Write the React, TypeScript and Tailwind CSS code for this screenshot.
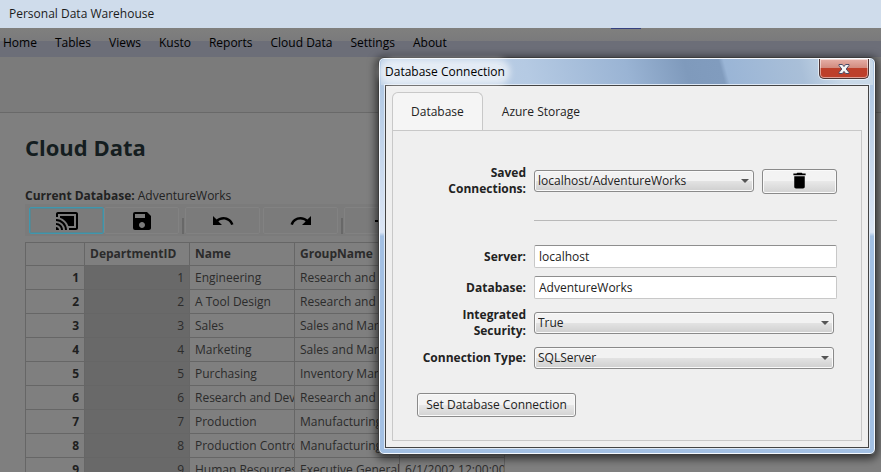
import { useState } from "react";
import type { ReactNode } from "react";
import { clsx } from "clsx";
import {
  MdAdd,
  MdCastConnected,
  MdDelete,
  MdRedo,
  MdSave,
  MdUndo,
} from "react-icons/md";

const menuItems = [
  "Home",
  "Tables",
  "Views",
  "Kusto",
  "Reports",
  "Cloud Data",
  "Settings",
  "About",
];

const departments = [
  { id: 1, name: "Engineering", group: "Research and Development" },
  { id: 2, name: "A Tool Design", group: "Research and Development" },
  { id: 3, name: "Sales", group: "Sales and Marketing" },
  { id: 4, name: "Marketing", group: "Sales and Marketing" },
  { id: 5, name: "Purchasing", group: "Inventory Management" },
  { id: 6, name: "Research and Development", group: "Research and Development" },
  { id: 7, name: "Production", group: "Manufacturing" },
  { id: 8, name: "Production Control", group: "Manufacturing" },
  { id: 9, name: "Human Resources", group: "Executive General and Admin" },
];

function ToolButton({
  label,
  active,
  children,
}: {
  label: string;
  active?: boolean;
  children: ReactNode;
}) {
  return (
    <button
      type="button"
      aria-label={label}
      className={clsx(
        "flex h-[27px] w-[75px] shrink-0 items-center justify-center rounded-xs border text-black",
        active
          ? "border-[#3f97ae] shadow-[inset_0_0_0_1px_#5b858f]"
          : "border-[#828282]"
      )}
    >
      {children}
    </button>
  );
}

function Separator() {
  return <div className="mr-px ml-[3px] h-4 w-0.5 shrink-0 self-end bg-[#686868]" />;
}

function Toolbar() {
  return (
    <div className="flex h-8 items-start bg-[#7b7b7b] pt-[3px] pb-0.5 pl-1">
      <ToolButton label="Connect" active>
        <MdCastConnected size={24} />
      </ToolButton>
      <ToolButton label="Save">
        <MdSave size={24} />
      </ToolButton>
      <Separator />
      <div className="flex gap-[3px]">
        <ToolButton label="Undo">
          <MdUndo size={24} />
        </ToolButton>
        <ToolButton label="Redo">
          <MdRedo size={24} />
        </ToolButton>
      </div>
      <Separator />
      <ToolButton label="Add">
        <MdAdd size={24} />
      </ToolButton>
    </div>
  );
}

function DepartmentTable() {
  const cell = "overflow-hidden border border-[#666666] px-[5px] py-0 whitespace-nowrap";

  return (
    <table className="mt-1.5 w-[480px] table-fixed border-collapse text-[#2b2b2b]">
      <colgroup>
        <col className="w-[59px]" />
        <col className="w-[105px]" />
        <col className="w-[105px]" />
        <col className="w-[105px]" />
        <col className="w-[105px]" />
      </colgroup>
      <thead>
        <tr className="h-[23px] text-left">
          <th className={cell}></th>
          <th className={cell}>DepartmentID</th>
          <th className={cell}>Name</th>
          <th className={cell}>GroupName</th>
          <th className={cell}>ModifiedDate</th>
        </tr>
      </thead>
      <tbody>
        {departments.map((row) => (
          <tr key={row.id} className="h-6">
            <th className={clsx(cell, "text-right text-[#1f1f1f]")}>{row.id}</th>
            <td className={clsx(cell, "bg-[#696969] text-right")}>{row.id}</td>
            <td className={cell}>{row.name}</td>
            <td className={cell}>{row.group}</td>
            <td className={cell}>6/1/2002 12:00:00</td>
          </tr>
        ))}
      </tbody>
    </table>
  );
}

function Field({
  id,
  label,
  children,
}: {
  id: string;
  label: ReactNode;
  children: ReactNode;
}) {
  return (
    <div className="flex items-center gap-2">
      <label htmlFor={id} className="w-[109px] shrink-0 text-right font-bold">
        {label}
      </label>
      {children}
    </div>
  );
}

function TextBox({ id, value }: { id: string; value: string }) {
  return (
    <input
      id={id}
      type="text"
      defaultValue={value}
      className="h-[23px] min-w-0 flex-1 rounded-xs border border-[#c8c8c8] border-t-[#8e8e8e] bg-white px-1 outline-none"
    />
  );
}

function DropDown({ id, options }: { id: string; options: string[] }) {
  return (
    <div className="relative min-w-0 flex-1">
      <select
        id={id}
        className="block h-[22px] w-full appearance-none rounded-[3px] border border-[#8a8a8a] bg-linear-to-b from-[#f2f2f2] from-50% via-[#e3e3e3] via-50% to-[#cfcfcf] pr-5 pl-[3px] shadow-[inset_0_0_0_1px_#fafafa] outline-none"
      >
        {options.map((option) => (
          <option key={option}>{option}</option>
        ))}
      </select>
      <svg
        viewBox="0 0 8 4"
        className="pointer-events-none absolute top-[9px] right-[5px] h-1 w-2 fill-[#555555]"
      >
        <path d="M0 0h8L4 4z" />
      </svg>
    </div>
  );
}

function ConnectionForm() {
  const button =
    "rounded-[3px] border border-[#8a8a8a] bg-linear-to-b from-[#f3f3f3] from-50% via-[#e8e8e8] via-50% to-[#d2d2d2] shadow-[inset_0_0_0_1px_#fafafa]";

  return (
    <form className="px-6 pt-[34px] pb-[23px]" onSubmit={(e) => e.preventDefault()}>
      <Field
        id="saved"
        label={
          <>
            Saved
            <br />
            Connections:
          </>
        }
      >
        <DropDown id="saved" options={["localhost/AdventureWorks"]} />
        <button
          type="button"
          aria-label="Delete connection"
          className={clsx(button, "flex h-[25px] w-[75px] items-start justify-center text-black")}
        >
          <MdDelete size={21} />
        </button>
      </Field>
      <hr className="mt-[23px] mb-6 ml-[117px] border-[#b9b9b9]" />
      <div className="flex flex-col gap-2">
        <Field id="server" label="Server:">
          <TextBox id="server" value="localhost" />
        </Field>
        <Field id="database" label="Database:">
          <TextBox id="database" value="AdventureWorks" />
        </Field>
        <div className="flex flex-col gap-2 pr-[3px]">
          <Field
            id="security"
            label={
              <>
                Integrated
                <br />
                Security:
              </>
            }
          >
            <DropDown id="security" options={["True", "False"]} />
          </Field>
          <Field id="type" label="Connection Type:">
            <DropDown id="type" options={["SQLServer", "AzureSQL"]} />
          </Field>
        </div>
      </div>
      <button type="submit" className={clsx(button, "mt-6 block h-6 w-[159px]")}>
        Set Database Connection
      </button>
    </form>
  );
}

function ConnectionDialog() {
  const [tab, setTab] = useState("Database");

  return (
    <div
      role="dialog"
      aria-label="Database Connection"
      className="absolute top-[57px] right-[5px] left-[378px] rounded-md border border-[#3c3c3c] bg-linear-to-b from-[#a9c3e0] via-[#dce6f5] via-44% to-[#a3c0e3] to-45% px-1.5 pb-1.5 shadow-[0_2px_9px_2px_rgba(0,0,0,0.6),inset_0_0_0_1px_#f4f8fd]"
    >
      {/* Title bar */}
      <div className="-mx-1 mt-px flex h-[26px] items-start justify-between rounded-t-sm bg-[linear-gradient(75deg,#c3d5e9_0%,#b5cae3_30%,#9ab4d4_50%,#7f9abc_62%,#819cbe_69%,#9ab5d6_70%,#a9bfd8_85%,#c9d9e8_93%)] px-1">
        <h2 className="self-center rounded-full bg-white/60 leading-4 text-black shadow-[0_0_6px_5px_rgba(255,255,255,0.6)]">
          Database Connection
        </h2>
        <button
          type="button"
          aria-label="Close"
          className="flex h-5 w-[50px] items-center justify-center rounded-b-[5px] border border-t-0 border-[#4d3434] bg-linear-to-b from-[#e6b0a8] via-[#d28c80] via-45% to-[#bd3f2a] to-50% shadow-[inset_0_0_0_1px_rgba(255,255,255,0.5),0_0_0_1px_rgba(255,255,255,0.6)]"
        >
          <svg viewBox="0 0 12 12" className="h-3 w-3">
            <path
              d="M1 1.5h3.4L6 3.6l1.6-2.1H11v1L8.2 6l2.8 3.5v1H7.6L6 8.4l-1.6 2.1H1v-1L3.8 6 1 2.5z"
              fill="#f5f5f5"
              stroke="#4b4b66"
            />
          </svg>
        </button>
      </div>

      <div className="border border-[#444444] bg-[#efefef] p-1.5 shadow-[0_0_0_1px_#dfe9f5]">
        <div role="tablist" className="flex">
          {["Database", "Azure Storage"].map((name) => (
            <button
              key={name}
              type="button"
              role="tab"
              aria-selected={tab === name}
              onClick={() => setTab(name)}
              className={clsx(
                "h-[38px] rounded-t-md border border-b-0 px-[18px]",
                tab === name ? "border-[#c8c8c8] bg-[#f5f5f5]" : "border-transparent"
              )}
            >
              {name}
            </button>
          ))}
        </div>
        <div role="tabpanel" className="border border-[#c8c8c8]">
          <ConnectionForm />
        </div>
      </div>
    </div>
  );
}

export default function App() {
  return (
    <div className="relative h-screen overflow-hidden bg-[#7f7f7f] font-['Open_Sans','Noto_Sans',sans-serif] text-[12px] leading-4 text-[#222222]">
      <header className="flex h-7 items-center bg-[#cfdceb] px-[9px] text-[#1b1b1b]">
        Personal Data Warehouse
      </header>

      <nav className="relative flex h-[29px] items-center gap-[18px] bg-linear-to-b from-[#80807e] from-0% via-[#7a7a7c] via-44% to-[#6c6e78] to-45% px-[3px] text-black">
        {menuItems.map((item) => (
          <a key={item} href="#" className="whitespace-nowrap">
            {item}
          </a>
        ))}
        <div className="absolute top-0 left-[611px] h-px w-[30px] bg-[#36417f]" />
      </nav>

      <div className="h-14 border-b border-[#696969] bg-[#7b7b7b]" />

      <main className="px-[25px] pt-[18px]">
        <h1 className="text-[22px] leading-8 font-bold text-[#141d20]">Cloud Data</h1>
        <p className="mt-[25px] whitespace-nowrap">
          <b>Current Database:</b> AdventureWorks
        </p>
        <Toolbar />
        <DepartmentTable />
      </main>

      <ConnectionDialog />
    </div>
  );
}
